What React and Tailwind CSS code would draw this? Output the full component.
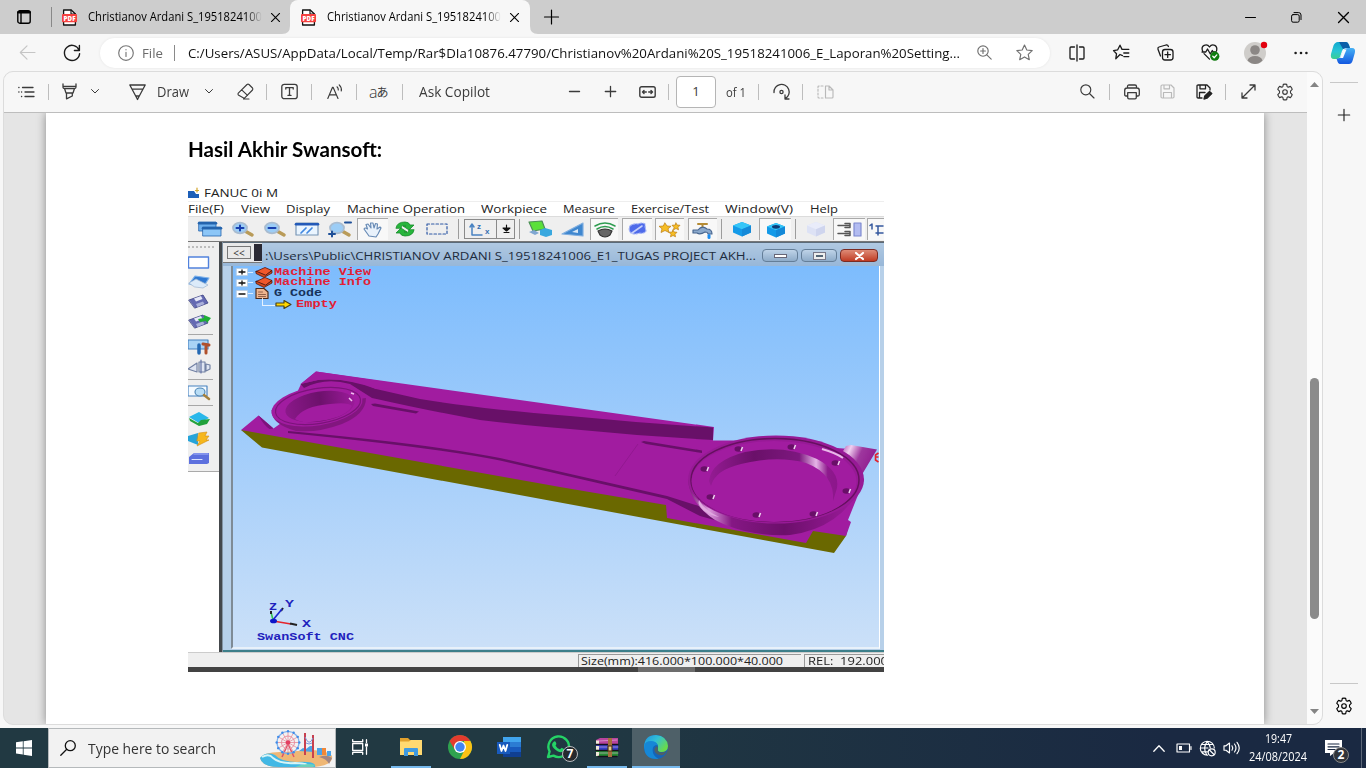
import { useLayoutEffect, useRef } from "react";

/* Single line of text fitted to a fixed width. */
function Fit({ w, className = "", children }) {
  const ref = useRef(null);
  useLayoutEffect(() => {
    const el = ref.current;
    el.style.transform = "none";
    const n = el.getBoundingClientRect().width;
    if (n) el.style.transform = `scaleX(${w / n})`;
  }, [w]);
  return (
    <span className={`block shrink-0 whitespace-pre ${className}`} style={{ width: w }}>
      <span ref={ref} className="inline-block origin-left">{children}</span>
    </span>
  );
}

function Ico({ w = 16, h = w, vb, c = "", sw = 1.15, children }) {
  return (
    <svg width={w} height={h} viewBox={vb || `0 0 ${w} ${h}`} className={`block shrink-0 overflow-visible ${c}`} fill="none" stroke="currentColor" strokeWidth={sw} strokeLinecap="round" strokeLinejoin="round">
      {children}
    </svg>
  );
}

const Sep = ({ c = "" }) => <div className={`h-4 w-px shrink-0 bg-[#bdbdbd] ${c}`} />;

const Gear = ({ c }) => (
  <Ico w={18} vb="0 0 18 18" c={c}>
    <path d="M7.3 1.4Q9 .8 10.7 1.4L11.1 3.5Q11.6 4.2 12.4 4.1L14.4 3.4Q15.8 4.8 16.2 6.4L14.7 7.9Q14.1 9 14.7 10.1L16.2 11.6Q15.7 13.3 14.4 14.6L12.4 13.9Q11.5 13.8 11.1 14.5L10.7 16.6Q9 17.2 7.3 16.6L6.9 14.5Q6.5 13.8 5.6 13.9L3.6 14.6Q2.3 13.3 1.8 11.6L3.3 10.1Q3.9 9 3.3 7.9L1.8 6.4Q2.2 4.8 3.6 3.4L5.6 4.1Q6.5 4.2 6.9 3.5Z" />
    <circle cx="9" cy="9" r="2.3" />
  </Ico>
);

const Pdf = ({ c }) => (
  <Ico w={15} h={17} c={c}>
    <path d="M1.6 1h7.6l4.2 4v11H1.6z" fill="#fff" stroke="#111" strokeWidth="1.3" />
    <path d="M9 1v4h4.4" stroke="#111" />
    <rect x="0" y="5" width="15" height="8.3" rx="1" fill="#f5413f" stroke="none" />
    <text x="1.6" y="11.5" fontSize="6.2" fontWeight="800" fill="#fff" stroke="none" fontFamily="Open Sans, sans-serif" textLength="12">PDF</text>
  </Ico>
);

const X = ({ c, w = 9 }) => <Ico w={w} vb="0 0 10 10" sw={1.2} c={c}><path d="M.5.5l9 9M9.5.5l-9 9" /></Ico>;

const FADE = "h-5 w-[174px] shrink-0 overflow-hidden [mask-image:linear-gradient(to_right,black_158px,transparent_174px)]";

function TabStrip() {
  return (
    <div className="flex h-[34px] items-center bg-[#cdcdcd] text-black">
      <Ico w={14} c="ml-[17px]" sw={1.4}>
        <rect x=".8" y=".8" width="12.4" height="12.4" rx="2" /><path d="M1.500 2.300h11" strokeWidth="2.600" /><path d="M4 3v10" />
      </Ico>
      <div className="ml-5 h-5 w-px bg-[#888]" />
      <Pdf c="ml-[10px]" />
      <div className={`ml-[11px] ${FADE}`}><Fit w={174} className="text-[12px] leading-5">Christianov Ardani S_1951824100</Fit></div>
      <X c="ml-[9px]" />
      <div className="relative ml-[10px] flex h-full w-[240px] items-center rounded-t-lg bg-[#f7f7f7]">
        <svg className="absolute -left-2 bottom-0 h-2 w-2" viewBox="0 0 8 8"><path d="M8 0v8H0Q8 8 8 0" fill="#f7f7f7" /></svg>
        <svg className="absolute -right-2 bottom-0 h-2 w-2" viewBox="0 0 8 8"><path d="M0 0v8h8Q0 8 0 0" fill="#f7f7f7" /></svg>
        <Pdf c="ml-[11px]" />
        <div className={`ml-[11px] ${FADE}`}><Fit w={174} className="text-[12px] leading-5">Christianov Ardani S_1951824100</Fit></div>
        <X c="ml-[9px]" />
      </div>
      <Ico w={14} c="ml-[14px]" sw={1.2}><path d="M7.500 0v14M.5 7h14" /></Ico>
      <div className="ml-auto mr-[17px] flex items-center">
        <Ico w={10} sw={1}><path d="M.5 5.5h10" /></Ico>
        <Ico w={11} c="ml-9" sw={1}><rect x=".6" y="2.6" width="7.6" height="7.6" rx="1.5" /><path d="M3 .6h4.6Q10 .6 10 3v4.6" /></Ico>
        <X c="ml-9" w={11} />
      </div>
    </div>
  );
}

function AddressRow() {
  return (
    <div className="flex h-[37px] items-center bg-[#f7f7f7] text-[#1b1b1b]">
      <Ico w={17} c="ml-[19px] text-[#c5c5c5]"><path d="M16 8.5H1.3M8 1.8L1.3 8.5 8 15.2" /></Ico>
      <Ico w={18} c="ml-[27px]" sw={1.4}><path d="M16.2 6.4A7.6 7.6 0 1 0 16.6 9.6M16.4 1.5v5h-5" /></Ico>
      <div className="ml-[19px] flex h-[30px] w-[950px] items-center rounded-full bg-white shadow-[0_0_3px_rgba(0,0,0,0.08)]">
        <Ico w={16} c="ml-[18px] text-[#767676]"><circle cx="8" cy="8" r="7.3" /><path d="M8 7.2v4.2M8 4.6v.2" /></Ico>
        <Fit w={21} className="ml-2 text-[13.500px] leading-5 text-[#6b6b6b]">File</Fit>
        <div className="ml-[11px] h-4 w-px bg-[#8a8a8a]" />
        <Fit w={772} className="ml-[13px] text-[13.500px] leading-5 text-[#111]">C:/Users/ASUS/AppData/Local/Temp/Rar$DIa10876.47790/Christianov%20Ardani%20S_19518241006_E_Laporan%20Setting...</Fit>
        <Ico w={15} c="ml-[17px] text-[#707070]"><circle cx="6" cy="6" r="5.2" /><path d="M9.8 9.8l4.4 4.4M3.6 6h4.8M6 3.6v4.8" /></Ico>
        <Ico w={17} c="ml-6 text-[#707070]"><path d="M8.5 1l2.3 5 5.4.6-4 3.7 1.1 5.4-4.8-2.8-4.8 2.8 1.1-5.4-4-3.7 5.4-.6z" /></Ico>
      </div>
      <Ico w={16} c="ml-[19px]" sw={1.3}><path d="M5.5 2H2Q1 2 1 3v10q0 1 1 1h3.5M10.5 2H14q1 0 1 1v10q0 1-1 1h-3.5M8 0v16" /></Ico>
      <Ico w={17} c="ml-7" sw={1.3}><path d="M9.5 11.6L7 10.5 2.8 14.7l.7-4.9-3-3.2 4.2-.8L7 1.2l2 4.2h6.8M10.8 9h5M10.8 12.6h5" /></Ico>
      <Ico w={17} c="ml-[27px]" sw={1.3}><rect x="5.5" y="5.5" width="10.5" height="10.5" rx="2.5" /><path d="M10.7 8v5.4M8 10.7h5.4M3.5 12L1 5.3Q.5 3.5 2 3L9 1q1.8-.4 2.4 1.5" /></Ico>
      <Ico w={19} h={17} c="ml-[27px]" sw={1.3}>
        <path d="M1.6 7Q0 3 3.2 1.4 6.5 0 8.5 3 10.5 0 13.8 1.4 16.5 3 15.6 6.6M3 9.6l5.5 5.5M1 8h3.8L6.5 5l2.8 5 2-3.5 1 1.5h3" />
        <circle cx="13.8" cy="12.2" r="4.6" fill="#107c10" stroke="none" /><path d="M11.8 12.3l1.4 1.4 2.6-2.8" stroke="#fff" />
      </Ico>
      <Ico w={22} c="ml-6" >
        <circle cx="11" cy="11" r="11" fill="#cfcdca" stroke="none" /><circle cx="11" cy="8" r="4.8" fill="#8b8785" stroke="none" /><path d="M3.5 18.5Q5 14 11 14t7.5 4.5Q15 22 11 22t-7.5-3.5" fill="#8b8785" stroke="none" /><circle cx="20" cy="3" r="3.2" fill="#e3000f" stroke="none" />
      </Ico>
      <Ico w={14} h={4} c="ml-7"><g fill="currentColor" stroke="none"><circle cx="1.6" cy="2" r="1.3" /><circle cx="7" cy="2" r="1.3" /><circle cx="12.4" cy="2" r="1.3" /></g></Ico>
      <Ico w={24} h={22} c="ml-[23px]">
        <defs>
          <linearGradient id="cpa" x1="0" y1="0" x2="0" y2="1"><stop stopColor="#10a8cf" /><stop offset=".55" stopColor="#29c6d5" /><stop offset="1" stopColor="#3ccf8f" /></linearGradient>
          <linearGradient id="cpb" x1="0" y1="0" x2="0" y2="1"><stop stopColor="#47b2f5" /><stop offset="1" stopColor="#1357e0" /></linearGradient>
        </defs>
        <path d="M7 0h8q2 0 3 3l1 3h-5q-2 0-3 3l-2 6q-1 2-3 2H3q-4 0-3-5L2.500 3.500Q4 0 7 0" fill="url(#cpa)" stroke="none" />
        <path d="M8 0h7q2 0 3 3l1 3h-4l-3 1Z" fill="#0b5fa9" stroke="none" />
        <path d="M17 22H9q-2 0-3-4l-.5-1.500Q9 17 10 14l3-6q1-2 4-2h4q4 0 2.800 5l-2.300 8q-1 3-3.500 3" fill="url(#cpb)" stroke="none" />
        <path d="M12.500 7.500h3l-3.500 8.500H9z" fill="#f7fbff" stroke="none" />
      </Ico>
    </div>
  );
}

const Chev = ({ c }) => <Ico w={8} h={5} c={c} sw={1}><path d="M.5.5L4 4 7.500.5" /></Ico>;

function PdfToolbar() {
  return (
    <div className="flex h-[41px] items-center border-b border-[#bdbdbd] bg-[#f7f7f7] pb-px text-[#3b3b3b]">
      <Ico w={16} h={12} c="ml-[14px]" sw={1.3}><path d="M4.500 1.500H15M7 6h9M7 10.500h9M.8 1.500h.2M.8 6h.2M3.500 6h.2M3.500 10.500h.2" /></Ico>
      <Sep c="ml-[14px]" />
      <Ico w={15} h={17} c="ml-[13px]" sw={1.3}><path d="M1 1v3q0 1.500 1.500 1.500h10Q14 5.500 14 4V1M2.500 5.500L4 10h7l1.500-4.500M4.500 10v5.800L10.300 13v-3M1 3.300h13" /></Ico>
      <Chev c="ml-[14px]" />
      <Ico w={17} h={16} c="ml-[30px]" sw={1.3}><path d="M.8 1h15.400L9.500 13.500 8.500 15.500 7.500 13.500zM3.300 5.200h10.400M6.800 12h3.400" /></Ico>
      <Fit w={32} className="ml-[11px] text-[14px] leading-5">Draw</Fit>
      <Chev c="ml-4" />
      <Ico w={17} c="ml-6"><path d="M1.300 10.200L10 1.500q1-.8 2 0L15.500 5q.8 1 0 2L8 14.700q-.8.800-1.800 0L1.300 12q-.7-.9 0-1.800M4.700 6.800l5.800 5.600M6.500 16H12" /></Ico>
      <Sep c="ml-[12px]" />
      <Ico w={17} c="ml-[14px]" sw={1.3}><rect x=".8" y="1.300" width="15.400" height="14.400" rx="2.500" /><path d="M4.800 6V4.600h7.400V6M8.500 4.600v7.800M7 12.400h3" /></Ico>
      <Sep c="ml-[13px]" />
      <Ico w={16} c="ml-[15px]"><path d="M.8 14.500L5.500 3.300h.6L11 14.500M2.300 10.800h7M10 2.800Q11.500 4 11.300 6M12.200.8Q15 3.500 14.300 7" /></Ico>
      <Sep c="ml-[13px]" />
      <div className="ml-3 flex h-6 w-5 items-center text-[15px] leading-none tracking-[-1px]"><span className="text-[16px] font-light">a</span><span className="font-['Noto_Sans_CJK_JP',sans-serif] text-[12px]">あ</span></div>
      <Sep c="ml-[13px]" />
      <Fit w={71} className="ml-[16px] text-[14px] leading-5">Ask Copilot</Fit>
      <Ico w={11} c="ml-[79px]" sw={1.4}><path d="M.5 5.500h10" /></Ico>
      <Ico w={11} c="ml-[25px]" sw={1.3}><path d="M.3 5.500h10.400M5.500.3v10.400" /></Ico>
      <Ico w={17} h={12} c="ml-[23px]" sw={1.4}><rect x=".8" y=".8" width="15.400" height="10.400" rx="1.800" /><path d="M3.500 6h3.800M9.700 6h3.800M5 4.500L3.500 6 5 7.500M12 4.500L13.500 6 12 7.500" /></Ico>
      <Sep c="ml-3" />
      <div className="ml-[7px] flex h-8 w-10 items-center justify-center rounded-sm border border-[#b5b5b5] bg-white text-[13px]">1</div>
      <Fit w={20} className="ml-[10px] text-[13px] leading-5">of 1</Fit>
      <Sep c="ml-3" />
      <Ico w={18} c="ml-[14px]" sw={1.3}><path d="M1 9.500A7.600 7.600 0 1 1 12.500 15.500M12 11.800v4.200h4" /><circle cx="8.500" cy="9" r="1.600" /></Ico>
      <Sep c="ml-[11px]" />
      <Ico w={17} h={14} c="ml-[14px] text-[#b9b9b9]"><path d="M8.500 1H12l4 4v7q0 1-1 1H8.500zM12 1v4h4" /><path d="M6 1H2Q1 1 1 2v10q0 1 1 1h4" strokeDasharray="2 1.800" /></Ico>
      <Ico w={15} c="ml-[246px]"><circle cx="5.800" cy="5.800" r="5" /><path d="M9.500 9.500l4.500 4.500" /></Ico>
      <Sep c="ml-[14px]" />
      <Ico w={16} c="ml-[14px]" sw={1.3}><path d="M3.500 4V2.500Q3.500 1 5 1h6q1.500 0 1.500 1.500V4M3.500 12H2Q.7 12 .7 10.500V6.500Q.7 4 3 4h10q2.300 0 2.300 2.500v4Q15.300 12 14 12h-1.500M3.700 8.700h8.600v4.800q0 1.300-1.300 1.300H5q-1.300 0-1.300-1.300z" /></Ico>
      <Ico w={15} c="ml-[20px] text-[#b9b9b9]"><path d="M2.200 1H11l3 3v8.800q0 1.200-1.200 1.200H2.200Q1 14 1 12.800V2.200Q1 1 2.200 1M4 1v3.800h5.500V1M3.500 14V8.500h8V14" /></Ico>
      <Ico w={16} c="ml-[21px] text-[#222]" sw={1.3}><path d="M6 14H2.200Q1 14 1 12.800V2.200Q1 1 2.200 1H11l3 3v2M4 1v3.800h5.500V1M3.500 14V8.500H9" /><path d="M8 15l.8-3L13.500 7.500 15.800 9.500 11 14.200z" fill="currentColor" /></Ico>
      <Sep c="ml-[13px]" />
      <Ico w={15} c="ml-[15px]" sw={1.3}><path d="M1 14L14 1M9 1h5v5M1 9v5h5" /></Ico>
      <Gear c="ml-[20px]" />
    </div>
  );
}

const Lens = ({ c, sign, extra }) => (
  <Ico w={24} h={16} c={c}>
    <path d="M14 10l7 4" stroke="#b99b58" strokeWidth="3.500" /><ellipse cx="9" cy="7" rx="7" ry="5.300" fill="#9ccdf6" stroke="#a9bcd0" strokeWidth="1.800" />
    {sign && <path d={sign} stroke="#173fae" strokeWidth="2" />}
    {extra && <path d="M1 13h6M4 10.500v5M17 1.500h6" stroke="#1d4f98" strokeWidth="2" />}
  </Ico>
);

const Cube = ({ c, hole, pale }) => (
  <Ico w={22} h={16} c={c}>
    <g stroke="none"><path d="M11 1l9 3.500v7L11 15.500 2 11.500v-7z" fill={pale ? "#dde2f5" : "#149ae8"} /><path d="M11 1l9 3.500-9 3.800-9-3.800z" fill={pale ? "#e9ecfa" : "#36c6f8"} /><path d="M20 4.500v7l-9 4V8.300z" fill={pale ? "#cfd5ee" : "#1489d8"} />{hole && <ellipse cx="11" cy="4.800" rx="4" ry="1.900" fill="#0b3c78" />}</g>
  </Ico>
);

const BSep = () => <div className="h-5 w-px bg-[#9c9c9c]" />;
const PRESS = "flex h-[22px] items-center justify-center border-l border-t border-[#a9a9a9] bg-[#f8f8f8]";

function CncToolbar() {
  return (
    <div className="flex h-[26px] shrink-0 items-center border-b border-t border-b-[#777] border-t-[#dcdcdc] bg-[#efefef]">
      <Ico w={24} h={16} c="ml-[10px]"><g stroke="#2464ad" strokeWidth=".8"><rect x="1" y="1" width="17" height="9" fill="#6eb0ed" /><path d="M1 2.300h17" strokeWidth="2.500" /><rect x="5" y="6" width="18" height="9" fill="#8cc6f7" /><path d="M5 7.300h18" strokeWidth="2.500" /></g></Ico>
      <Lens c="ml-[9px]" sign="M5.500 7h7M9 4.500v5" />
      <Lens c="ml-[8px]" sign="M5.500 7h7" />
      <Ico w={24} h={14} c="ml-[8px]"><rect x="1" y="1" width="22" height="12" fill="#eaf5ff" stroke="#7795b5" /><path d="M1 2.200h22" stroke="#2259b8" strokeWidth="2.600" /><path d="M6 11l5-5M12 11l5-5" stroke="#4087e0" strokeWidth="1.700" /></Ico>
      <Lens c="ml-[9px]" extra />
      <div className={`${PRESS} ml-[5px] w-[31px]`}><Ico w={20} h={15}><path d="M6 14L1 7q1-2 3.500 0L3 2.500 5 2l3 4L7.500 1 10 1l1 5 1.500-4.500 2 .5-.5 5 3-2 1 1-3 6-2 3z" fill="#e8f1fb" stroke="#6689b4" /></Ico></div>
      <Ico w={22} h={16} c="ml-[6px]"><path d="M2 7Q3 1 11 1q4 0 5 3h4l-5 5-6-4h3Q8 3 7 7zM20 9q-1 6-9 6-4 0-5-3H2l5-5 6 4h-3q4 2 5-2z" fill="#27b53c" stroke="#158a29" strokeWidth=".8" /></Ico>
      <Ico w={22} h={12} c="ml-[10px]" sw={1.200}><rect x="1" y="1" width="20" height="10" stroke="#315aa6" strokeDasharray="2.500 2" /></Ico>
      <div className="ml-[10px]"><BSep /></div>
      <div className="ml-[5px] flex h-5 w-[51px] shrink-0 items-center border border-[#8a8a8a]">
        <Ico w={24} h={15} c="ml-[4px]"><path d="M3 3v10h10M1 5l2-3 2 3" stroke="#4a83c2" strokeWidth="1.500" /><text x="8" y="6.500" fontSize="8" fontWeight="700" fill="#3670b2" stroke="none" fontFamily="Liberation Sans, sans-serif">z</text><text x="16" y="12" fontSize="8" fontWeight="700" fill="#3670b2" stroke="none" fontFamily="Liberation Sans, sans-serif">x</text></Ico>
        <div className="ml-[3px] h-full w-px bg-[#8a8a8a]" />
        <Ico w={9} h={8} c="ml-[5px]"><path d="M1 3h7L4.500 6zM4.500 0v3M2 7.500h5" fill="#111" stroke="#111" /></Ico>
      </div>
      <div className="ml-[4px]"><BSep /></div>
      <Ico w={26} h={16} c="ml-[8px]"><path d="M1 1l13-1 3 8-12 2z" fill="#5ae03a" stroke="#4b8e55" /><path d="M1 11l6 3 4-2-5-3z" fill="#7fa6d2" stroke="none" /><path d="M12 9l5-2 7 2v5l-6 2-6-2z" fill="#39a8df" stroke="none" /></Ico>
      <Ico w={24} h={15} c="ml-[7px]"><path d="M1 12L22 1v13z" fill="#3f87cf" stroke="#7faee0" /><path d="M11 10l6-3v4z" fill="#d8e8f7" stroke="none" /></Ico>
      <div className={`${PRESS} ml-[5px] w-[28px]`}><Ico w={22} h={16}><path d="M1 4Q11-2 21 4M3 7q8-5 16 0" stroke="#2e9c50" strokeWidth="1.500" /><path d="M4 9q7-4 14 0l-2 4q-5 4-10 0z" fill="#666" stroke="#333" /></Ico></div>
      <div className={`${PRESS} ml-[4px] w-[30px]`}><Ico w={22} h={15}><path d="M3 4q4-3 8-2 4-2 7 0 0 4 1 7-2 3-7 2-4 2-8 0-3-3-1-7z" fill="#4f6bea" stroke="#9fb0f5" strokeDasharray="2 1.500" /><path d="M5 11l10-7" stroke="#c5d0fa" strokeWidth="1.600" /></Ico></div>
      <div className={`${PRESS} ml-[3px] w-[29px]`}><Ico w={24} h={15}><path d="M7 1l2 3 4 .3-3 2.500 1 3.700-4-2-4 2 1-3.700-3-2.500L5 4zM18 1l1 2 3 .3-2 2 .5 2.500L18 6.500l-2.500 1.300.5-2.500-2-2L17 3zM15 8l1 2 3 .3-2 2 .5 2.500-2.500-1.300-2.500 1.300.5-2.500-2-2 3-.3z" fill="#f6bd25" stroke="#bb7d10" strokeWidth=".7" /></Ico></div>
      <div className={`${PRESS} ml-[4px] w-[29px]`}><Ico w={22} h={16}><path d="M6 2h9M10.500 2v3" stroke="#b58b35" strokeWidth="2" /><path d="M1 8h5q4-5 9-1 5 0 5 5h-4q0-2-3-2-5 3-8 1H1z" fill="#8ba9cc" stroke="#48668f" /><path d="M17 13.500v2" stroke="#1a8cf0" strokeWidth="3" /></Ico></div>
      <div className="ml-[4px]"><BSep /></div>
      <Cube c="ml-[9px]" />
      <div className={`${PRESS} ml-[6px] w-[32px]`}><Cube hole /></div>
      <div className="ml-[4px]"><BSep /></div>
      <Cube c="ml-[9px]" pale />
      <div className={`${PRESS} ml-[6px] w-[32px]`}><Ico w={26} h={15}><path d="M1 3.500h12M1 11.500h12M8 1.500h5v4H8M8 9.500h5v4H8" stroke="#555" strokeWidth="1.500" /><rect x="17" y="1" width="7" height="13" fill="#b3bcf1" stroke="#7c88cf" /></Ico></div>
      <div className={`${PRESS} ml-[2px] w-[17px]`}><Ico w={13} h={14}><path d="M2 6V1L0 2.500M6 3h7M6 10h7M8 3v9" stroke="#35589e" strokeWidth="1.500" /></Ico></div>
    </div>
  );
}

const disk = (
  <g><path d="M1 6L15 1l5 8-13 5z" fill="#6469b2" stroke="#3b4082" strokeWidth=".8" /><path d="M6 4.500l7-2.500 1.500 3L8 7.500z" fill="#e6e8f7" stroke="none" /><path d="M8 10l7-2.500 1.500 2.500L9.500 13z" fill="#aab0da" stroke="none" /></g>
);

function SideTools() {
  const hr = "h-px w-[25px] shrink-0 bg-[#a7a7a7]";
  return (
    <div className="flex w-[31px] shrink-0 flex-col bg-white">
      <div className="flex h-[230px] flex-col border-b border-[#aaa] bg-[#efefef]">
        <div className="mt-[4px] w-[26px] border-t-2 border-dotted border-[#bcbcbc]" />
        <Ico w={22} h={13} c="mt-[8px]"><rect x=".5" y="1" width="20" height="11" fill="#fff" stroke="#5182dd" strokeWidth="1.400" /></Ico>
        <Ico w={23} h={15} c="mt-[5px]"><path d="M1 10L7 2l14 2-5 8z" fill="#2f78d1" stroke="#7fb2ea" /><path d="M1 9l7-4 4 2 8 4-5 3-8-1z" fill="#dcebfa" stroke="#9fb5cf" strokeWidth=".7" /></Ico>
        <Ico w={22} h={15} c="mt-[5px]">{disk}</Ico>
        <Ico w={22} h={15} c="mt-[5px]">{disk}<path d="M10 5l6-1V1l7 3-4 5-1-2-6 1z" fill="#1fae35" stroke="none" /></Ico>
        <div className={`${hr} mt-[5px]`} />
        <Ico w={23} h={16} c="mt-[4px]"><rect x="0" y="1" width="20" height="9" fill="#a9d3f5" stroke="#4681bf" /><path d="M11 6v8" stroke="#2469b3" strokeWidth="3.500" /><path d="M18 7v7M15 5l6 1" stroke="#b0502c" strokeWidth="3" /></Ico>
        <Ico w={23} h={15} c="mt-[4px]"><path d="M0 10l9-6v9zM11 3h6v10h-6zM18 5l4 1v4l-4 2z" fill="#dfe5f2" stroke="#7281a3" /><path d="M13 1v13" stroke="#5f6da0" /></Ico>
        <div className={`${hr} mt-[5px]`} />
        <Ico w={23} h={16} c="mt-[5px]"><rect x="0" y="1" width="19" height="10" fill="#f4faff" stroke="#4681bf" /><ellipse cx="12" cy="7" rx="5" ry="4" fill="#b8ddf6" stroke="#4e86b5" /><path d="M16 10l5 4" stroke="#a4813e" strokeWidth="2.500" /></Ico>
        <div className={`${hr} mt-[4px]`} />
        <Ico w={23} h={16} c="mt-[5px]"><path d="M1 6l10-5 10 6-10 5z" fill="#28b7ea" stroke="none" /><path d="M1 7l9 5 3-3 9-1-3 5-8 2-9-5z" fill="#22a23c" stroke="none" /></Ico>
        <Ico w={23} h={16} c="mt-[4px]"><path d="M0 5l10-3v12L0 10z" fill="#26a4d9" stroke="none" /><path d="M11 2l8-1-2 4h4l-3 4h3L9 15l3-5H9z" fill="#f6b71d" stroke="#d38d12" strokeWidth=".6" /></Ico>
        <Ico w={22} h={13} c="mt-[5px]"><path d="M1 5L6 1h15v10l-2 1H1z" fill="#5d70de" stroke="none" /><path d="M6 2h14" stroke="#a9b6fa" /><path d="M4 7.500h10" stroke="#dbe2ff" /></Ico>
      </div>
    </div>
  );
}

const HOLES = [[739, 449], [792, 447], [836, 463], [847, 491], [814, 514], [757, 515], [711, 497], [705, 469]];

function Scene() {
  return (
    <svg className="block h-[381px] w-[646px]" viewBox="233 266 646 381">
      <defs>
        <linearGradient id="sky" x1="0" y1="0" x2="0" y2="1"><stop stopColor="#7dbcfd" /><stop offset="1" stopColor="#cbe0f8" /></linearGradient>
        <linearGradient id="pocket" x1="709" x2="838" y1="0" y2="0" gradientUnits="userSpaceOnUse"><stop stopColor="#951b94" /><stop offset=".35" stopColor="#6a1069" /><stop offset=".7" stopColor="#7d187f" /><stop offset=".83" stopColor="#e6b4e7" /><stop offset=".92" stopColor="#8e198d" /><stop offset="1" stopColor="#8c168b" /></linearGradient>
        <linearGradient id="outer" x1="688" x2="863" y1="0" y2="0" gradientUnits="userSpaceOnUse"><stop stopColor="#761675" /><stop offset=".12" stopColor="#dc9add" /><stop offset=".25" stopColor="#851784" /><stop offset=".55" stopColor="#6c0f6b" /><stop offset="1" stopColor="#a11ca0" /></linearGradient>
        <linearGradient id="small" x1="286" x2="356" y1="0" y2="0" gradientUnits="userSpaceOnUse"><stop stopColor="#8a1889" /><stop offset=".5" stopColor="#6d116c" /><stop offset="1" stopColor="#9c1b9b" /></linearGradient>
        <linearGradient id="lug" x1="845" x2="877" y1="445" y2="460" gradientUnits="userSpaceOnUse"><stop stopColor="#c57ac5" /><stop offset=".18" stopColor="#f0cff0" /><stop offset=".5" stopColor="#9e379e" /><stop offset="1" stopColor="#8e198d" /></linearGradient>
      </defs>
      <rect x="233" y="266" width="646" height="381" fill="url(#sky)" />
      <path d="M241 430L262 447.500 560 502.500 834 553 846 536 849 524 700 480 560 470 300 431Z" fill="#6a6800" />
      <path d="M241 430L258.500 415.500 273.500 428.500 284 421 301 384 316 371.500 714 427 713 440.500 735 440.500 850 449 864 480 848 520 851 522 846 536 813 531 806 543 667 518 666 505 560 487Z" fill="#a11ca0" />
      <path d="M258.500 415.500l15 13-4 .5q-6-4-11-13.500" fill="#7d137c" />
      <path d="M300.500 384L304 388Q325 377 350 384L372 398Q430 411 480 420 520 425 570 429 640 436 713 440V427.500Q640 423 570 416 480 409 420 399L376 389Q352 378 320 379.500Z" fill="#681068" />
      <path d="M300.500 384L316 371.500 420 387 376 389Q345 377 318 380Z" fill="#a11ca0" />
      <path d="M371 404l2 2 43 7.500 3-2-44-8zM641 442l5 2 56 9v-2.500L644 441z" fill="#681068" />
      <path d="M288 431Q430 444 500 458L667 496 702 507 740 527 700 516 667 499 500 460.500Q430 447 288 433Z" fill="#681068" />
      <path d="M638 444L615 476" stroke="#8b178a" strokeWidth=".7" />
      {/* small bearing seat */}
      <path d="M271.500 410Q271 424 296 431 318 433 342 424 366 414 366 398Z" fill="#82167f" />
      <ellipse cx="317" cy="406" rx="46" ry="19.500" transform="rotate(-9 317 406)" fill="#a11ca0" />
      <ellipse cx="318" cy="406" rx="43" ry="17.500" transform="rotate(-9 318 406)" fill="none" stroke="#7b137a" strokeWidth="1.200" />
      <ellipse cx="320" cy="406.500" rx="35" ry="15" transform="rotate(-9 320 406.500)" fill="url(#small)" />
      <path d="M295 419Q303 406 330 404 349 402 352 406 347 417 320 421 301 424 295 419" fill="#a11ca0" />
      <path d="M351 393l3 1M349 398l3 3" stroke="#f0c0f0" strokeWidth="1.500" />
      {/* large bearing seat */}
      <path d="M846 446l5-1 26 4.500-15 25q-7-13-21-20z" fill="url(#lug)" />
      <path d="M688 480Q690 504 715 520 748 537 790 535 842 528 862 484Z" fill="url(#outer)" />
      <ellipse cx="776" cy="479.500" rx="88" ry="44" fill="#971a96" />
      <ellipse cx="775" cy="480" rx="84" ry="41.500" fill="none" stroke="#65105f" strokeWidth="1.500" />
      <ellipse cx="774" cy="481.500" rx="82.500" ry="40.500" fill="#a11ca0" />
      <path d="M699 500Q704 510 719 517 712 516 704 511 697 505 699 500" fill="#e0a8e0" />
      <path d="M822 449Q836 453 843 458" stroke="#e9b8e9" strokeWidth="2" fill="none" />
      <path d="M709 481Q711 461 745 452 784 444 817 459 840 471 837 488L833 501Q835 474 806 463 777 455 741 464 715 470 711 486Z" fill="url(#pocket)" />
      {HOLES.map(([x, y]) => (
        <g key={x}><ellipse cx={x - 0.5} cy={y} rx="4" ry="2.700" fill="#690f68" /><path d={`M${x + 2} ${y + 2}l1.500-4`} stroke="#f3d5f3" strokeWidth="1.600" /></g>
      ))}
      <path d="M878.500 453l-3 2v5l3 2m-3-5h3" stroke="#e4222b" strokeWidth="1.600" fill="none" />
      {/* axes */}
      <path d="M273 620l-2-8" stroke="#2fc84d" strokeWidth="1.500" /><path d="M271 614v-3M281 611l2-3" stroke="#222" strokeWidth="2" /><path d="M273 620l9-11" stroke="#1b25d0" strokeWidth="1.700" /><path d="M273 621l18 3" stroke="#e5242c" strokeWidth="1.500" /><path d="M290 623.500l7 1.500" stroke="#222" strokeWidth="2" /><ellipse cx="273.500" cy="621" rx="3.500" ry="2.300" fill="#0d16c9" />
      <g fill="#1f22bd" fontFamily="Liberation Mono, monospace" fontSize="10.5" fontWeight="700"><text x="269" y="610" textLength="8" lengthAdjust="spacingAndGlyphs">Z</text><text x="285" y="607" textLength="9" lengthAdjust="spacingAndGlyphs">Y</text><text x="302" y="627" textLength="9" lengthAdjust="spacingAndGlyphs">X</text></g>
    </svg>
  );
}

const Box = ({ plus }) => <Ico w={12} h={8}><rect x=".5" y=".5" width="11" height="7" fill="#fff" stroke="#b9c9d9" strokeWidth=".7" /><path d={plus ? "M3 4h6M6 2v4" : "M3 4h6"} stroke="#111" strokeWidth="1.300" /></Ico>;
const Book = () => <Ico w={18} h={11}><path d="M1 4.500L10 .5l7 3-6 4.500z" fill="#f0582c" stroke="#55170b" strokeWidth=".8" /><path d="M1 4.500v2l8 4 8-4.500V3.500L11 8z" fill="#d4481f" stroke="#401007" strokeWidth=".7" /></Ico>;
const MONO = "font-['Liberation_Mono',monospace] text-[10.500px] font-bold leading-[11px]";

function Tree() {
  return (
    <div className="absolute left-[3px] top-px flex flex-col">
      <div className="flex h-[10.5px] items-center"><Box plus /><div className="mr-0.5 h-px w-[5px] bg-white/70" /><Book /><Fit w={97} className={`${MONO} ml-px text-[#e21e35]`}>Machine View</Fit></div>
      <div className="flex h-[10.5px] items-center"><Box plus /><div className="mr-0.5 h-px w-[5px] bg-white/70" /><Book /><Fit w={97} className={`${MONO} ml-px text-[#e21e35]`}>Machine Info</Fit></div>
      <div className="flex h-[11px] items-center"><Box /><div className="mr-0.5 h-px w-[5px] bg-white/70" /><Ico w={15} h={11}><path d="M1 .5h8l4 3.500v6.500H1z" fill="#eeb58f" stroke="#4c2918" /><path d="M3.500 4h4M3.500 6.500h7M3.500 8.500h7" stroke="#7b4c38" strokeWidth=".8" /></Ico><Fit w={48} className={`${MONO} ml-[4px] text-[#17325a]`}>G Code</Fit></div>
      <div className="flex h-[11px] items-center"><div className="ml-[26px] h-[8px] w-[13px] -translate-y-[3px] border-b border-l border-white/80" /><Ico w={17} h={9}><path d="M1 3h8V.5L16 4.500 9 8.500V6H1z" fill="#ffd800" stroke="#4b4217" /></Ico><Fit w={41} className={`${MONO} ml-[4px] text-[#e21e35]`}>Empty</Fit></div>
    </div>
  );
}

const MENU = [["File(F)", 36, 0], ["View", 29, 17], ["Display", 44, 16], ["Machine Operation", 118, 17], ["Workpiece", 66, 16], ["Measure", 52, 16], ["Exercise/Test", 78, 16], ["Window(V)", 68, 16], ["Help", 28, 17]];
const WBTN = "flex h-[13px] w-[36px] items-center justify-center rounded-sm border border-[#647e98] bg-linear-to-b from-[#bfd3e8] to-[#8eacc9]";

function CncShot() {
  return (
    <div className="h-[486px] w-[696px] overflow-hidden">
      <div className="flex h-[486px] w-[696px] flex-col bg-white text-[#222] blur-[0.3px]">
        <div className="flex h-[15px] shrink-0 items-center">
          <Ico w={12} h={11}><path d="M0 3h6l2 3h3v4H0z" fill="#1c5fb8" stroke="none" /><path d="M9 0v4M7.500 2.500h3" stroke="#d2a52a" strokeWidth="1.200" /></Ico>
          <Fit w={74} className="ml-[4px] text-[10px] leading-[15px]">FANUC 0i M</Fit>
        </div>
        <div className="flex h-[15px] shrink-0 items-center border-t border-[#eee]">
          {MENU.map(([t, w, g]) => <div key={t} style={{ marginLeft: g }}><Fit w={w} className="-mt-px text-[10px] font-medium leading-[14px]">{t}</Fit></div>)}
        </div>
        <CncToolbar />
        <div className="flex h-[410px] shrink-0">
          <SideTools />
          <div className="w-[4px] shrink-0 border-r border-[#8495a4] bg-[#44484b]" />
          <div className="flex w-[661px] shrink-0 flex-col border-b-2 border-b-[#3d7f8a] bg-[#b7d0e9]">
            <div className="flex h-[24px] shrink-0 border-t border-[#5a6a78] bg-linear-to-b from-[#b0c9e2] to-[#98b7d8]">
              <div className="flex h-[20px] w-[39px] shrink-0 items-center justify-between border-b border-[#777] bg-[#e9e9e9] pl-[4px]">
                <div className="flex h-[13px] w-[24px] items-center justify-center border border-[#777] text-[10px] leading-none text-[#333]">&lt;&lt;</div>
                <div className="h-[17px] w-[8px] bg-[#2b2933]" />
              </div>
              <Fit w={491} className="ml-[3px] mt-[5px] text-[10.500px] font-medium leading-[17px] text-[#1e2c3c]">:\Users\Public\CHRISTIANOV ARDANI S_19518241006_E1_TUGAS PROJECT AKH...</Fit>
              <div className="ml-[6px] mt-[6px] flex gap-[3px]">
                <div className={WBTN}><div className="h-[4px] w-[13px] border border-[#667] bg-white" /></div>
                <div className={WBTN}><div className="h-[6px] w-[11px] border-2 border-[#eee] bg-[#567] outline outline-[#778]" /></div>
                <div className="flex h-[13px] w-[38px] items-center justify-center rounded-sm border border-[#7b2b22] bg-linear-to-b from-[#dd8a76] to-[#bf3a22]"><Ico w={9} h={6} sw={2.200} c="text-white"><path d="M1 0l7 6M8 0L1 6" /></Ico></div>
              </div>
            </div>
            <div className="ml-[8px] h-[383px] w-[649px] border-b-2 border-l-2 border-r border-b-[#e8f1fa] border-l-[#7e8b96] border-r-white">
              <div className="relative">
                <Scene />
                <Tree />
                <Fit w={97} className={`${MONO} absolute left-[24px] top-[366px] text-[#1f22bd]`}>SwanSoft CNC</Fit>
              </div>
            </div>
          </div>
        </div>
        <div className="flex h-[15px] shrink-0 items-center border-t border-[#ccc] bg-[#efefef] text-[10px] font-medium">
          <div className="ml-[390px] flex h-[13px] w-[226px] items-center border-l border-t border-[#999] pl-[2px] pt-px"><Fit w={202} className="leading-[13px]">Size(mm):416.000*100.000*40.000</Fit></div>
          <div className="ml-[3px] flex h-[13px] w-[80px] items-center border-l border-t border-[#999] pl-[3px] pt-px"><Fit w={80} className="leading-[13px]">REL:  192.000</Fit></div>
        </div>
        <div className="h-[5px] shrink-0 bg-[#434343] pl-[450px]"><div className="h-full w-[57px] bg-[#6d6d6d]" /></div>
      </div>
    </div>
  );
}

const Tri = ({ up }) => <Ico w={9} h={5}><path d={up ? "M0 5L4.500 0 9 5z" : "M0 0L4.500 5 9 0z"} fill="#858585" stroke="none" /></Ico>;

const SPOKES = Array.from({ length: 12 }, (_, i) => (i * Math.PI) / 6);

function SearchArt() {
  return (
    <svg className="ml-auto mr-[2px] block" width="74" height="38" viewBox="0 0 74 38">
      <path d="M1 29Q6 22 25 23L52 21Q70 22 73 27 75 36 55 38H20Q3 38 1 29" fill="#efb775" />
      <path d="M1 29Q7 22 16 26 22 33 38 33 58 32 56 38H20Q3 38 1 29" fill="#42b8e5" />
      <path d="M3 28q7-4 11 1 7 6 22 5 12 0 15 4" fill="none" stroke="#d8f5f6" strokeWidth="2" />
      <path d="M36 38q11-5 20-2l-2 2z" fill="#6ad1bd" />
      <path d="M40 22l4-3 3 1 4-3h4v6zM58 19h5v7h-5zM68 22h4v5h-4z" fill="#4ba3e8" /><path d="M63 19h4v7h-4z" fill="#f18636" /><path d="M60 28q8-3 13 1l-3 6q-2-5-10-7" fill="#a18582" />
      <path d="M29 15l-6 13M29 15l6 13" stroke="#df5368" strokeWidth="1.500" />
      <g fill="none"><circle cx="29" cy="13.500" r="11" stroke="#7eb0ee" strokeWidth="1.200" /><circle cx="29" cy="13.500" r="6.500" stroke="#eb8fa0" />
        {SPOKES.map((a) => <g key={a}><path d={`M29 13.5L${29 + 11 * Math.cos(a)} ${13.5 + 11 * Math.sin(a)}`} stroke="#e98a9a" strokeWidth=".8" /><circle cx={29 + 11.3 * Math.cos(a)} cy={13.5 + 11.3 * Math.sin(a)} r="1.200" fill="#3f8ce7" /></g>)}
      </g>
      <circle cx="29" cy="13.500" r="2.300" fill="#e33e62" />
      <path d="M46 4v22M54 6v23" stroke="#c8404f" strokeWidth="2" /><path d="M46 8q4 10 8 1M47 14q3 2 6 0" stroke="#7a99dc" fill="none" />
    </svg>
  );
}

const Slot = ({ on, active, children }) => (
  <div className={`flex h-10 w-12 shrink-0 flex-col items-center ${active ? "bg-[#4e6068]" : ""}`}>
    <div className="flex h-[38px] items-center">{children}</div>
    {on && <div className={`h-0.5 bg-[#76b9ed] ${active ? "w-full" : "w-10"}`} />}
  </div>
);

function Taskbar() {
  return (
    <div className="flex h-10 items-center bg-linear-to-r from-[#213942] from-40% to-[#1a2942] to-85% text-white">
      <div className="flex w-12 justify-center"><Ico w={16}><path d="M0 2.300l6.800-1V7.500H0zM7.600 1.200L16 0v7.500H7.600zM0 8.400h6.800v6.200l-6.800-1zM7.600 8.400H16V16l-8.400-1.200z" fill="#fff" stroke="none" /></Ico></div>
      <div className="flex h-10 w-[288px] items-center border border-[#b5b9bb] bg-[#f2f2f2] text-[#333]">
        <Ico w={16} c="ml-[11px] text-[#111]" sw={1.300}><circle cx="10.300" cy="5.700" r="5" /><path d="M6.500 9.500L.8 15.200" /></Ico>
        <Fit w={128} className="ml-3 text-[15px] leading-5">Type here to search</Fit>
        <SearchArt />
      </div>
      <Slot><Ico w={16} sw={1.300}><path d="M.7.7v2h10v-2M.7 15.300v-2h10v2M.7 4.500h10v7H.7zM14.500.7v3M14.500 8v7.300" /><path d="M13 4.500h3v3h-3z" fill="#fff" stroke="none" /></Ico></Slot>
      <div className="w-[3px]" />
      <Slot on>
        <Ico w={22} h={18}><g stroke="none"><path d="M0 0h8l2 2h11v5H0z" fill="#e1a12d" /><path d="M0 3.500L9 3.500 11 2H22V17H0z" fill="#ffd971" /><path d="M4 18v-7q0-1 1-1h12q1 0 1 1v7h-4v-4H8v4z" fill="#3f9ae0" /></g></Ico>
      </Slot>
      <div className="w-px" />
      <Slot>
        <Ico w={24}><g stroke="none"><circle cx="12" cy="12" r="12" fill="#2fa24f" /><path d="M1.600 6A12 12 0 0 1 22.400 6H12L7 15z" fill="#e33b2e" /><path d="M22.400 6A12 12 0 0 1 12 24L17 14 16 6z" fill="#fbc116" /><circle cx="12" cy="12" r="6" fill="#fff" /><circle cx="12" cy="12" r="4.700" fill="#4285f4" /></g></Ico>
      </Slot>
      <div className="w-px" />
      <Slot>
        <Ico w={24} h={22}><g stroke="none"><path d="M6 1h18v5.500H6z" fill="#41a5ee" /><path d="M6 6h18v5.500H6z" fill="#2b7cd3" /><path d="M6 11h18v5.500H6z" fill="#185abd" /><path d="M6 16h18v5H6z" fill="#103f91" /><rect x="0" y="6" width="13" height="12" fill="#185abd" /></g><path d="M2.700 8.800L4.500 15l2-5.500 2 5.500 1.800-6.200" stroke="#fff" strokeWidth="1.800" /></Ico>
      </Slot>
      <div className="w-px" />
      <Slot>
        <div className="relative">
          <Ico w={24}><path d="M2 22l1.600-5.500A10.300 10.300 0 1 1 7.500 20.600z" stroke="#25d366" strokeWidth="2.400" /><path d="M8 6.500q1.500-1 2.300 2 .3.800-.8 2 1.500 3 4.500 4 1.500-2 2-1.600 3 1.100 2 2.500-2 3-6 1-5-2.400-6-6.400Q6 7.500 8 6.500" fill="#25d366" stroke="none" /></Ico>
          <div className="absolute left-[16px] top-[11px] flex h-4 w-4 items-center justify-center rounded-full border border-[#b9bcc0] bg-[#25292d] text-[12px] font-bold leading-none">7</div>
        </div>
      </Slot>
      <div className="w-px" />
      <Slot on>
        <Ico w={24} h={19}><g stroke="none"><path d="M1 2L5 0h18v6H1z" fill="#b8449d" /><path d="M1 7h22v5H1z" fill="#3440c8" /><path d="M1 13h22v5L21 19H3l-2-1z" fill="#268e32" /><path d="M1 2.500h3v4H1zM1 8h3v4H1zM1 14h3v4H1z" fill="#f1e9da" /><path d="M4 3l18-1M4 9h19M4 15h19" stroke="#e5bce2" strokeWidth=".6" /><path d="M1 6.500h22M1 12.500h22M3 18.500h19" stroke="#15101e" strokeWidth="1.300" /><path d="M13 0h4v19h-4z" fill="#a5703c" /><path d="M13 8h4v5h-4z" fill="#e7d186" stroke="#432a15" /></g></Ico>
      </Slot>
      <div className="w-px" />
      <Slot on active>
        <Ico w={24}>
          <defs><linearGradient id="eg" x1="0" y1="0" x2="1" y2=".6"><stop stopColor="#1d91e0" /><stop offset=".5" stopColor="#32bfd6" /><stop offset="1" stopColor="#6adc48" /></linearGradient></defs>
          <g stroke="none"><circle cx="12" cy="12" r="12" fill="#1464b9" /><path d="M.1 11Q1 0 12 0q11 1 12 11 0 6-7 6-4 0-3-3 1-7-6-7-6 0-8 7z" fill="url(#eg)" /><path d="M.1 11q1-5 7-5 5 0 6.500 4-5 0-5 5 0 6 6 9Q0 25 .1 11" fill="#1687d6" /><path d="M14 13q-1 4 3 4.500 4 0 6-2-1 2.500-3.500 4.500-5 1-8-2-3-4 1.500-7z" fill="#4e6068" /></g>
        </Ico>
      </Slot>
      <div className="ml-auto flex h-10 items-center">
        <Ico w={12} h={7} sw={1.300}><path d="M.8 6.200L6 .8l5.200 5.400" /></Ico>
        <Ico w={16} h={10} c="ml-[11px]"><path d="M1 1h12.500v8H1zM15 3.500v3" /><path d="M3 3h3v4H3z" fill="#fff" stroke="none" /></Ico>
        <Ico w={17} c="ml-[7px]"><path d="M8.500 15.200A7 7 0 1 1 15.300 8M1.500 8H9M3 4.500h11M2.500 11.800h6M8 15Q3 8.500 8.300 1.300 11 5 11.300 8" /><circle cx="12.700" cy="12.300" r="3.500" /><path d="M10.500 10l4.500 4.500" /></Ico>
        <Ico w={17} h={14} c="ml-[7px]"><path d="M1 4.800h2L6.500 2v10L3 9.200H1zM9 4.800q1.500 2 0 4.400M11.500 3q3 4 0 8M14 1.300q4.500 5.700 0 11.400" /></Ico>
        <div className="ml-[9px] flex w-[58px] flex-col items-center gap-[2px] leading-4"><Fit w={27} className="text-[12px]">19:47</Fit><Fit w={58} className="text-[12px]">24/08/2024</Fit></div>
        <div className="relative ml-[18px]">
          <Ico w={17} h={16}><path d="M0 0h17v13H9l-4 3v-3H0z" fill="#fff" stroke="none" /><path d="M3 4h11M3 6.800h11M3 9.500h7" stroke="#1a2942" /></Ico>
          <div className="absolute left-[8px] top-[7px] flex h-4 w-4 items-center justify-center rounded-full border border-[#888] bg-[#30343a] text-[12px] font-bold leading-none">2</div>
        </div>
        <div className="ml-[19px] mr-1 h-10 w-px bg-[#5c6778]" />
      </div>
    </div>
  );
}

export default function App() {
  return (
    <div className="flex h-[768px] w-[1366px] flex-col overflow-hidden bg-[#f7f7f7] font-['Open_Sans',sans-serif]">
      <TabStrip />
      <AddressRow />
      <div className="flex h-[657px] shrink-0">
        <div className="ml-[3px] flex h-[654px] w-[1320px] shrink-0 overflow-hidden rounded-[10px] border border-[#dcdcdc] bg-[#e5e5e5]">
          <div className="flex w-[1303px] shrink-0 flex-col">
            <PdfToolbar />
            <div className="flex min-h-0 flex-1 overflow-hidden pl-[42px]">
              <div className="w-[1218px] bg-white px-[142px] pt-[22px] shadow-[0_0_9px_rgba(0,0,0,0.4)]">
                <Fit w={194} className="mb-[23px] font-['Lato',sans-serif] text-[20px] font-bold leading-7 text-black">Hasil Akhir Swansoft:</Fit>
                <CncShot />
              </div>
            </div>
          </div>
          <div className="flex w-[15px] flex-col items-center bg-[#fbfbfb] pb-[10px] pt-[10px]">
            <Tri up />
            <div className="mt-[291px] h-[241px] w-[9px] rounded-full bg-[#8b8b8b]" />
            <div className="mt-auto"><Tri /></div>
          </div>
        </div>
        <div className="flex flex-1 flex-col items-center pb-[13px] pr-[2px]">
          <div className="mt-[11px] h-px w-7 bg-[#c8c8c8]" />
          <Ico w={12} c="mt-[26px] text-[#222]"><path d="M6 .3v11.400M.3 6h11.400" /></Ico>
          <div className="mt-auto h-px w-7 bg-[#c8c8c8]" />
          <Gear c="mt-[13px]" />
        </div>
      </div>
      <Taskbar />
    </div>
  );
}
